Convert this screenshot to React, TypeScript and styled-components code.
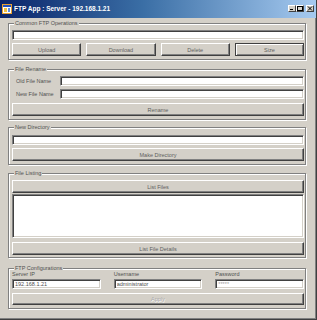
import React from "react";
import styled, { createGlobalStyle } from "styled-components";

const Global = createGlobalStyle`
  html, body { margin: 0; padding: 0; background: #d4d0c8; }
  body { font-family: "Liberation Sans", Arial, sans-serif; }
  * { box-sizing: border-box; }
`;

const Window = styled.div`
  width: 317px;
  height: 320px;
  background: #d4d0c8;
  display: flex;
  flex-direction: column;
  border-right: 1px solid #404040;
  border-bottom: 1px solid #404040;
  box-shadow: inset -1px -1px 0 #808080;
  overflow: hidden;
`;

const TitleBar = styled.div`
  height: 18px;
  flex: none;
  display: flex;
  align-items: center;
  padding: 0 2px 1px 2px;
  background: linear-gradient(to right, #0a246a 0%, #3a6ea5 45%, #a6caf0 100%);
`;

const AppIcon = styled.svg`
  width: 10px;
  height: 10px;
  flex: none;
`;

const Title = styled.span`
  margin-left: 2px;
  font-size: 6.5px;
  font-weight: bold;
  color: #ffffff;
  white-space: nowrap;
`;

const Controls = styled.div`
  margin-left: auto;
  display: flex;
  align-items: center;
`;

const CtlButton = styled.div<{ $gap?: number }>`
  width: 8px;
  height: 7px;
  margin-left: ${(p) => p.$gap ?? 0}px;
  background: #d4d0c8;
  border-top: 1px solid #ffffff;
  border-left: 1px solid #ffffff;
  border-right: 1px solid #404040;
  border-bottom: 1px solid #404040;
  display: flex;
  align-items: center;
  justify-content: center;
`;

const Content = styled.div`
  flex: 1;
  display: flex;
  flex-direction: column;
  padding: 5px 0 0 8px;
`;

const Group = styled.div<{ $mt: number; $pt: number; $pb: number }>`
  position: relative;
  width: 298px;
  margin-top: ${(p) => p.$mt}px;
  padding: ${(p) => p.$pt}px 1px ${(p) => p.$pb}px 3px;
  border: 1px solid #808080;
  box-shadow: inset 1px 1px 0 #ffffff, 1px 1px 0 #ffffff;
  display: flex;
  flex-direction: column;
`;

const GroupTitle = styled.span`
  position: absolute;
  top: -5px;
  left: 5px;
  padding: 0 1px;
  background: #d4d0c8;
  font-size: 5.5px;
  line-height: 8px;
  color: #505050;
  white-space: nowrap;
`;

const TextBox = styled.input`
  display: block;
  width: 100%;
  height: 10px;
  margin: 0;
  padding: 0 2px;
  background: #ffffff;
  font-family: "Liberation Sans", Arial, sans-serif;
  font-size: 5.5px;
  color: ${(p) => (p.$faint ? "#a0a0a0" : "#505050")};
  border: 1px solid;
  border-color: #808080 #ffffff #ffffff #808080;
  box-shadow: inset 1px 1px 0 #404040, inset -1px -1px 0 #d4d0c8;
  outline: none;
` as any;

const Button = styled.button<{ $h?: number; $default?: boolean }>`
  display: block;
  width: 100%;
  height: ${(p) => p.$h ?? 13}px;
  margin: 0;
  padding: 0;
  background: #d4d0c8;
  font-family: "Liberation Sans", Arial, sans-serif;
  font-size: 5.5px;
  color: #606060;
  border: 1px solid;
  border-color: ${(p) => (p.$default ? "#404040" : "#ffffff #404040 #404040 #ffffff")};
  box-shadow: ${(p) =>
    p.$default ? "inset 1px 1px 0 #ffffff, inset -1px -1px 0 #808080" : "inset -1px -1px 0 #808080"};
  &:disabled {
    color: #a8a8a8;
    text-shadow: 0.5px 0.5px 0 #ffffff;
  }
`;

const ButtonRow = styled.div`
  display: grid;
  grid-template-columns: repeat(4, 1fr);
  column-gap: 5px;
  margin-top: 3px;
`;

const FieldRow = styled.div<{ $mt?: number }>`
  display: grid;
  grid-template-columns: 48px 1fr;
  align-items: center;
  margin-top: ${(p) => p.$mt ?? 0}px;
`;

const RowLabel = styled.span`
  padding-left: 4px;
  font-size: 5.5px;
  color: #505050;
  white-space: nowrap;
`;

const Spaced = styled.div<{ $mt: number }>`
  margin-top: ${(p) => p.$mt}px;
`;

const ListBox = styled.div`
  height: 44px;
  margin-top: 1px;
  background: #ffffff;
  border: 1px solid;
  border-color: #808080 #ffffff #ffffff #808080;
  box-shadow: inset 1px 1px 0 #404040, inset -1px -1px 0 #d4d0c8;
`;

const ConfigGrid = styled.div`
  display: grid;
  grid-template-columns: 1fr 1fr 1fr;
  column-gap: 13px;
`;

const ConfigField = styled.div`
  display: flex;
  flex-direction: column;
  gap: 1px;
`;

const ConfigLabel = styled.span`
  font-size: 5.5px;
  line-height: 8px;
  color: #505050;
  white-space: nowrap;
`;

export default function App() {
  return (
    <>
      <Global />
      <Window>
        <TitleBar>
          <AppIcon viewBox="0 0 10 10">
            <rect x="0" y="0" width="10" height="10" fill="#e8a030" />
            <rect x="1" y="1" width="8" height="8" fill="#ffffff" />
            <rect x="1" y="1" width="8" height="2" fill="#2050c0" />
            <rect x="2" y="4" width="3" height="4" fill="#f0c040" />
            <rect x="6" y="4" width="2" height="4" fill="#6090e0" />
          </AppIcon>
          <Title>FTP App : Server - 192.168.1.21</Title>
          <Controls>
            <CtlButton>
              <svg width="6" height="5" viewBox="0 0 6 5">
                <rect x="1" y="3" width="3" height="1" fill="#000" />
              </svg>
            </CtlButton>
            <CtlButton>
              <svg width="6" height="5" viewBox="0 0 6 5">
                <rect x="0.5" y="0.5" width="5" height="4" fill="none" stroke="#000" strokeWidth="1" />
                <rect x="0" y="0" width="6" height="1" fill="#000" />
              </svg>
            </CtlButton>
            <CtlButton $gap={2}>
              <svg width="6" height="5" viewBox="0 0 6 5">
                <path d="M1 0.5 L5 4.5 M5 0.5 L1 4.5" stroke="#000" strokeWidth="1" />
              </svg>
            </CtlButton>
          </Controls>
        </TitleBar>
        <Content>
          <Group $mt={0} $pt={6} $pb={3}>
            <GroupTitle>Common FTP Operations</GroupTitle>
            <TextBox readOnly value="" />
            <ButtonRow>
              <Button>Upload</Button>
              <Button>Download</Button>
              <Button>Delete</Button>
              <Button $default>Size</Button>
            </ButtonRow>
          </Group>

          <Group $mt={9} $pt={6} $pb={3}>
            <GroupTitle>File Rename</GroupTitle>
            <FieldRow>
              <RowLabel>Old File Name</RowLabel>
              <TextBox readOnly value="" />
            </FieldRow>
            <FieldRow $mt={3}>
              <RowLabel>New File Name</RowLabel>
              <TextBox readOnly value="" />
            </FieldRow>
            <Spaced $mt={4}>
              <Button>Rename</Button>
            </Spaced>
          </Group>

          <Group $mt={7} $pt={7} $pb={3}>
            <GroupTitle>New Directory</GroupTitle>
            <TextBox readOnly value="" />
            <Spaced $mt={3}>
              <Button>Make Directory</Button>
            </Spaced>
          </Group>

          <Group $mt={8} $pt={6} $pb={2}>
            <GroupTitle>File Listing</GroupTitle>
            <Button>List Files</Button>
            <ListBox />
            <Spaced $mt={4}>
              <Button>List File Details</Button>
            </Spaced>
          </Group>

          <Group $mt={10} $pt={1} $pb={3}>
            <GroupTitle>FTP Configurations</GroupTitle>
            <ConfigGrid>
              <ConfigField>
                <ConfigLabel>Server IP</ConfigLabel>
                <TextBox readOnly value="192.168.1.21" />
              </ConfigField>
              <ConfigField>
                <ConfigLabel>Username</ConfigLabel>
                <TextBox readOnly value="administrator" />
              </ConfigField>
              <ConfigField>
                <ConfigLabel>Password</ConfigLabel>
                <TextBox readOnly value="*****" $faint />
              </ConfigField>
            </ConfigGrid>
            <Spaced $mt={4}>
              <Button $h={12} disabled>
                Apply
              </Button>
            </Spaced>
          </Group>
        </Content>
      </Window>
    </>
  );
}
